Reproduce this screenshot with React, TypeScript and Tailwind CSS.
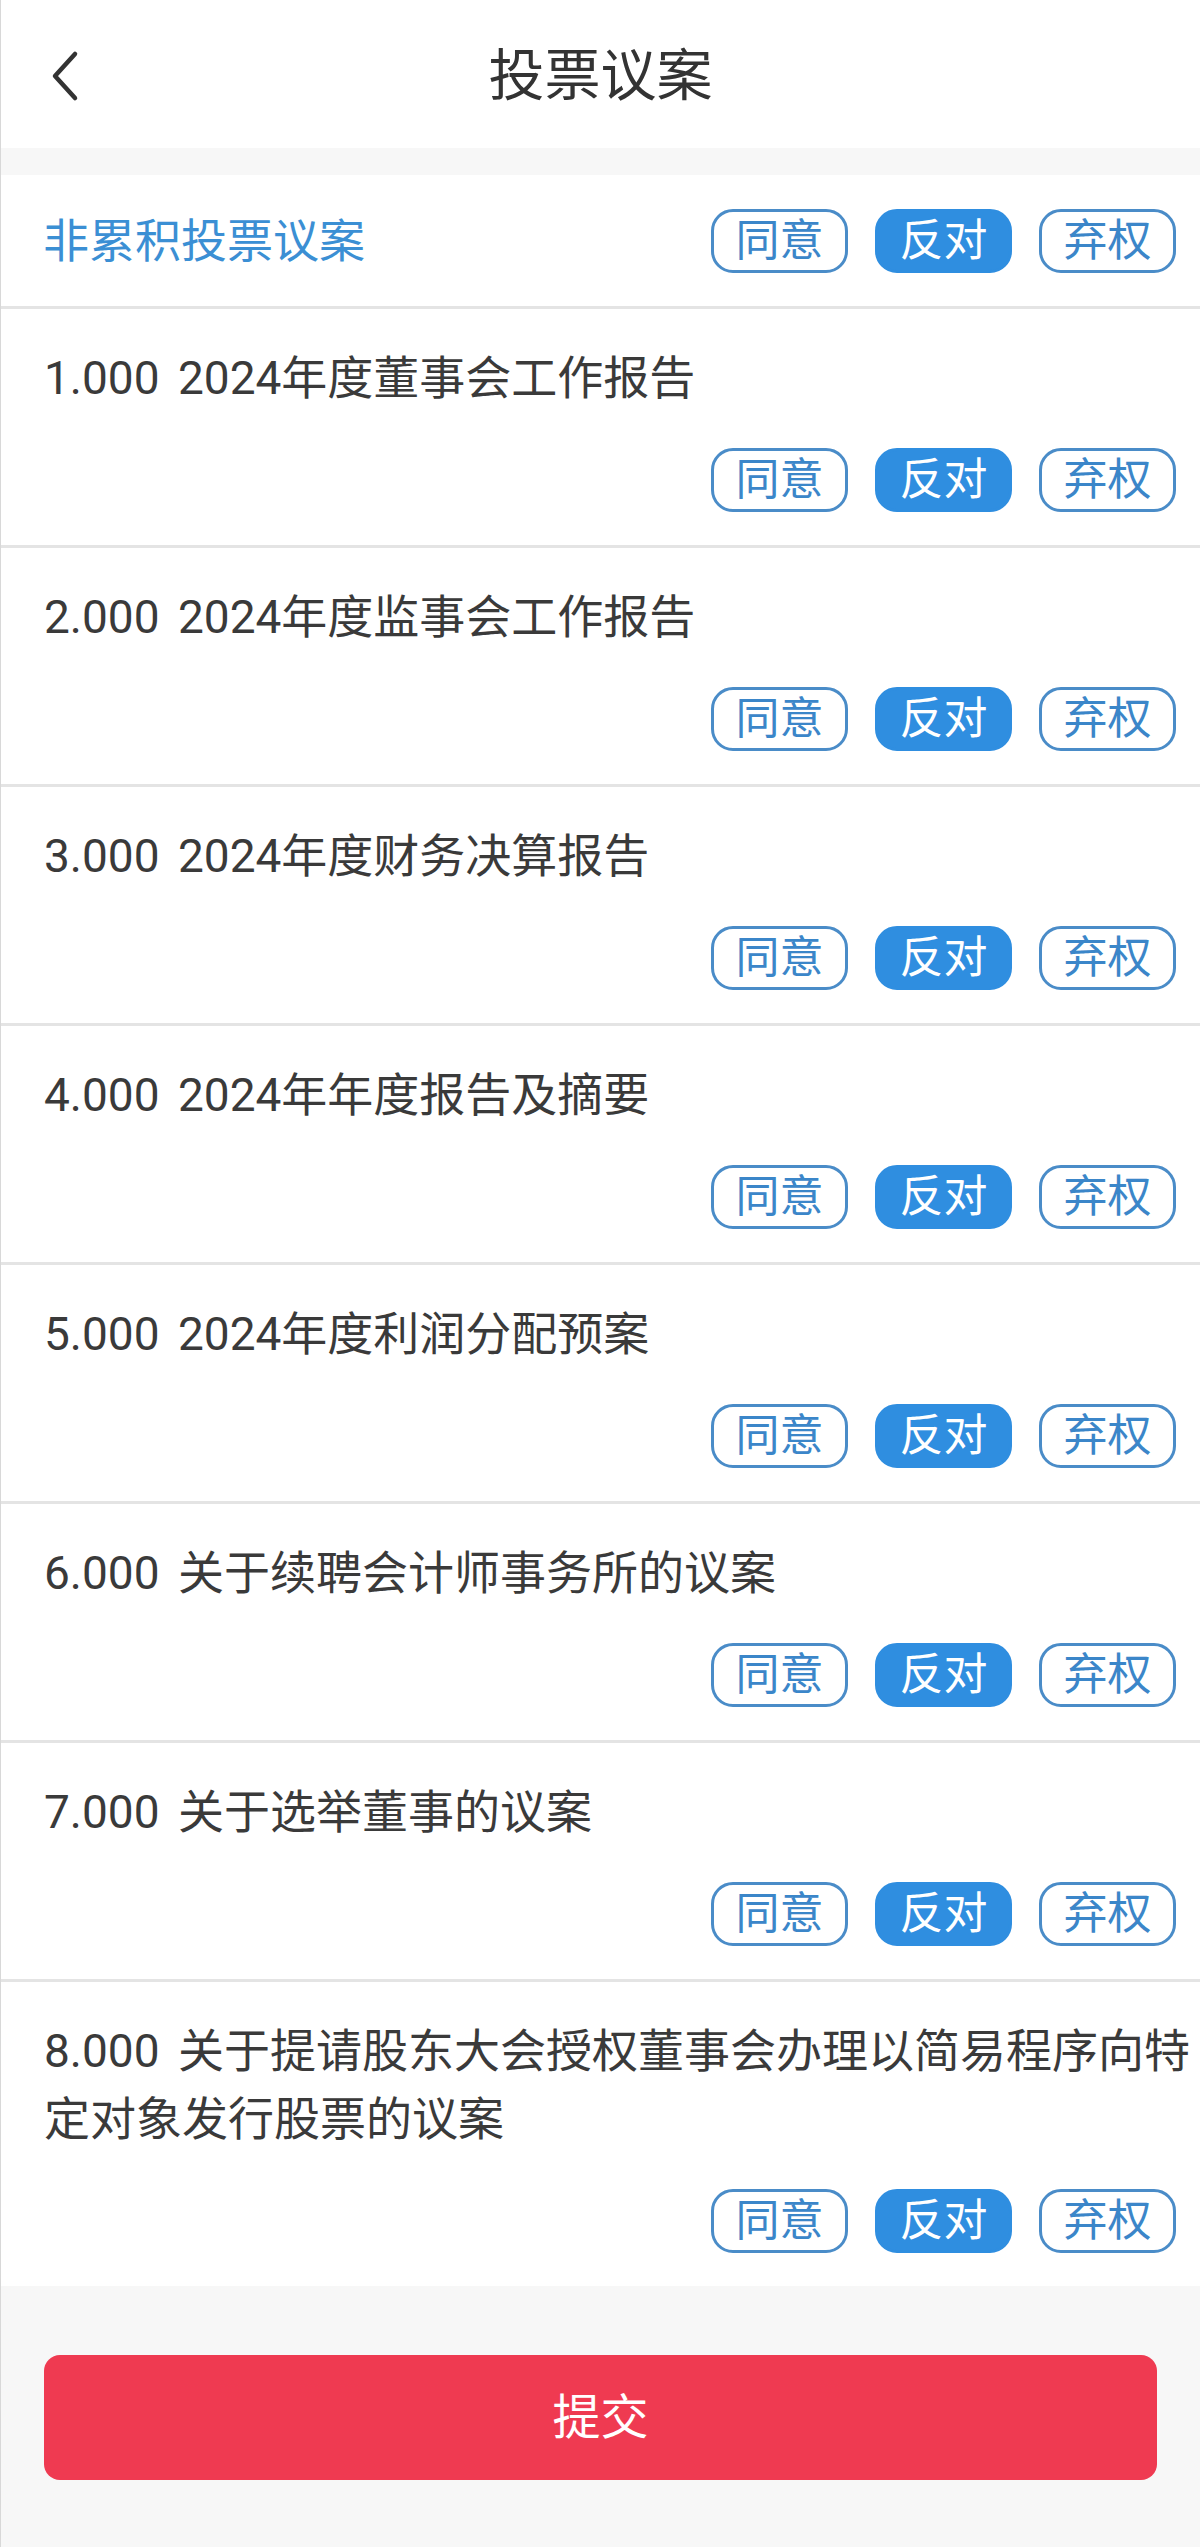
import { useState } from "react"

const proposals = [
  "1.000 2024年度董事会工作报告",
  "2.000 2024年度监事会工作报告",
  "3.000 2024年度财务决算报告",
  "4.000 2024年年度报告及摘要",
  "5.000 2024年度利润分配预案",
  "6.000 关于续聘会计师事务所的议案",
  "7.000 关于选举董事的议案",
  "8.000 关于提请股东大会授权董事会办理以简易程序向特定对象发行股票的议案",
]

const options = ["同意", "反对", "弃权"]

function VoteButtons({ value, onChange }: { value: string; onChange: (v: string) => void }) {
  return (
    <div className="flex items-center gap-[27px] mr-[20px]">
      {options.map((opt) =>
        opt === value ? (
          <button
            key={opt}
            onClick={() => onChange(opt)}
            className="w-[137px] h-[64px] rounded-[22px] border-[3px] border-[#2f8ee0] bg-[#2f8ee0] text-white text-[44px] leading-none flex items-center justify-center"
          >
            {opt}
          </button>
        ) : (
          <button
            key={opt}
            onClick={() => onChange(opt)}
            className="w-[137px] h-[64px] rounded-[22px] border-[3px] border-[#4a8cc8] bg-white text-[#3b86c9] text-[44px] leading-none flex items-center justify-center"
          >
            {opt}
          </button>
        )
      )}
    </div>
  )
}

export default function App() {
  const [all, setAll] = useState("反对")
  const [votes, setVotes] = useState<string[]>(proposals.map(() => "反对"))

  const setAllVotes = (v: string) => {
    setAll(v)
    setVotes(proposals.map(() => v))
  }

  return (
    <div
      className="w-[1200px] h-[2547px] bg-[#f7f7f7] border-l border-[#d8d8d8] flex flex-col"
      style={{ fontFamily: 'Roboto, "Noto Sans CJK SC", sans-serif' }}
    >
      {/* Header */}
      <header className="relative h-[148px] bg-white flex items-center justify-center shrink-0">
        <button className="absolute left-[44px] top-[44px] w-[40px] h-[64px] flex items-center justify-center">
          <svg width="32" height="52" viewBox="0 0 32 52" fill="none">
            <path d="M26 4 L6 26 L26 48" stroke="#333333" strokeWidth="4.5" strokeLinecap="round" strokeLinejoin="round" />
          </svg>
        </button>
        <h1 className="text-[56px] text-[#333333] leading-none pt-[4px]">投票议案</h1>
      </header>

      {/* List */}
      <div className="mt-[27px] bg-white">
        <div className="h-[134px] pl-[42px] pr-[4px] flex items-center justify-between border-b-[3px] border-[#e4e4e4]">
          <span className="text-[46px] text-[#3b8fd4] leading-none">非累积投票议案</span>
          <VoteButtons value={all} onChange={setAllVotes} />
        </div>

        {proposals.map((title, i) => (
          <div
            key={title}
            className={`pl-[43px] pr-[4px] pt-[35px] pb-[33px] flex flex-col ${
              i < proposals.length - 1 ? "border-b-[3px] border-[#e4e4e4]" : ""
            }`}
          >
            <p className="text-[46px] leading-[68px] text-[#3a3a3a] [word-spacing:7px]">{title}</p>
            <div className="mt-[36px] flex justify-end">
              <VoteButtons
                value={votes[i]}
                onChange={(v) => setVotes(votes.map((x, j) => (j === i ? v : x)))}
              />
            </div>
          </div>
        ))}
      </div>

      {/* Submit */}
      <div className="px-[43px] pt-[69px]">
        <button className="w-full h-[125px] rounded-[16px] bg-[#ef3a51] text-white text-[48px] leading-none flex items-center justify-center">
          提交
        </button>
      </div>
    </div>
  )
}
